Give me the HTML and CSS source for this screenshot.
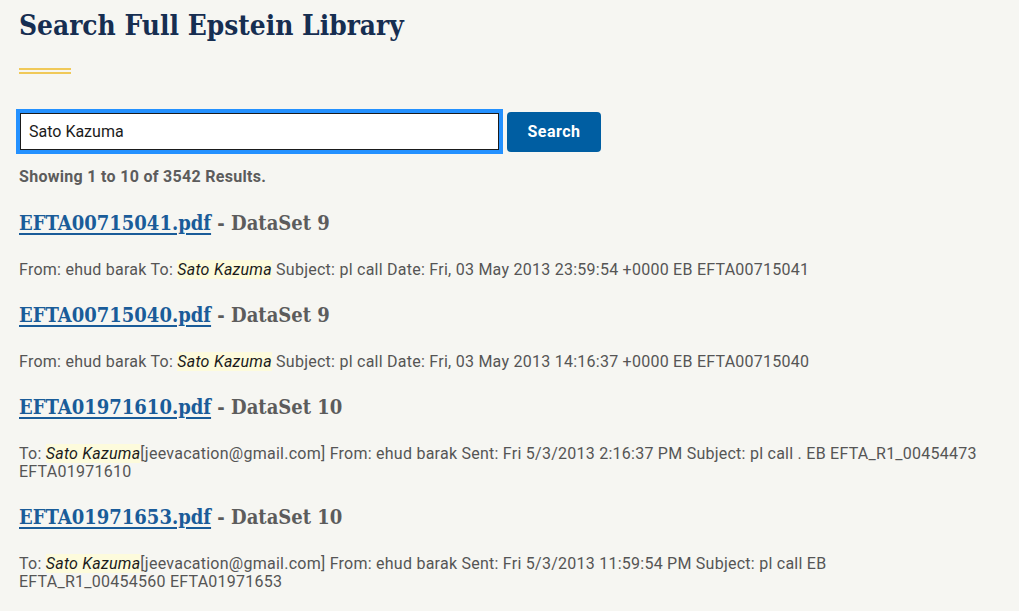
FILE: index.html
```html
<!DOCTYPE html>
<html lang="en">
<head>
<meta charset="utf-8">
<title>Search Full Epstein Library</title>
<link rel="stylesheet" href="styles.css">
</head>
<body>
<main class="page">
  <h1 class="title">Search Full Epstein Library</h1>
  <div class="rule"></div>
  <form class="search">
    <input class="search-input" type="text" value="Sato Kazuma">
    <button class="search-btn" type="button">Search</button>
  </form>
  <p class="count">Showing 1 to 10 of 3542 Results.</p>
  <ul class="results">
    <li class="result">
      <h2 class="result-title"><a href="#">EFTA00715041.pdf</a> - DataSet 9</h2>
      <p class="snippet">From: ehud barak To: <em class="hl">Sato Kazuma</em> Subject: pl call Date: Fri, 03 May 2013 23:59:54 +0000 EB EFTA00715041</p>
    </li>
    <li class="result">
      <h2 class="result-title"><a href="#">EFTA00715040.pdf</a> - DataSet 9</h2>
      <p class="snippet">From: ehud barak To: <em class="hl">Sato Kazuma</em> Subject: pl call Date: Fri, 03 May 2013 14:16:37 +0000 EB EFTA00715040</p>
    </li>
    <li class="result">
      <h2 class="result-title"><a href="#">EFTA01971610.pdf</a> - DataSet 10</h2>
      <p class="snippet">To: <em class="hl">Sato Kazuma</em>[jeevacation@gmail.com] From: ehud barak Sent: Fri 5/3/2013 2:16:37 PM Subject: pl call . EB EFTA_R1_00454473 EFTA01971610</p>
    </li>
    <li class="result">
      <h2 class="result-title"><a href="#">EFTA01971653.pdf</a> - DataSet 10</h2>
      <p class="snippet">To: <em class="hl">Sato Kazuma</em>[jeevacation@gmail.com] From: ehud barak Sent: Fri 5/3/2013 11:59:54 PM Subject: pl call EB EFTA_R1_00454560&nbsp;EFTA01971653</p>
    </li>
  </ul>
</main>
</body>
</html>
```
FILE: styles.css
```css
html, body {
  margin: 0;
  padding: 0;
  background: #f6f6f2;
}
body {
  font-family: "Roboto", "Liberation Sans", sans-serif;
  color: #1b1b1b;
}
.page {
  padding: 0 19px;
  max-width: 981px;
}
.title {
  margin: 0;
  padding-top: 8px;
  font-family: "DejaVu Serif Condensed", "DejaVu Serif", serif;
  font-stretch: condensed;
  font-weight: bold;
  font-size: 27.8px;
  line-height: 36px;
  color: #162e51;
}
.rule {
  width: 52px;
  height: 2px;
  margin-top: 24px;
  border-top: 2px solid #f0c959;
  border-bottom: 2px solid #f0c959;
}
.search {
  display: flex;
  align-items: center;
  gap: 8px;
  margin-top: 36px;
}
.search-input {
  box-sizing: border-box;
  width: 479px;
  height: 37px;
  margin: 3px 0 3px 1px;
  padding: 0 8px;
  border: 1px solid #1b1b1b;
  outline: 4px solid #2491ff;
  outline-offset: 0;
  background: #fff;
  font-family: "Roboto", "Liberation Sans", sans-serif;
  font-size: 16px;
  color: #1b1b1b;
}
.search-btn {
  width: 94px;
  height: 40px;
  border: 0;
  border-radius: 4px;
  background: #005ea2;
  color: #fff;
  font-family: "Roboto", "Liberation Sans", sans-serif;
  font-weight: bold;
  font-size: 16px;
  letter-spacing: 0.5px;
}
.count {
  margin: 14px 0 0;
  font-size: 16px;
  line-height: 20px;
  font-weight: bold;
  letter-spacing: 0.3px;
  color: #5c5c5c;
}
.results {
  list-style: none;
  margin: 0;
  padding: 0;
}
.result-title {
  margin: 22px 0 0;
  font-family: "DejaVu Serif Condensed", "DejaVu Serif", serif;
  font-stretch: condensed;
  font-weight: bold;
  font-size: 20px;
  line-height: 28px;
  color: #5c5c5c;
}
.result-title a {
  color: #1a5c99;
  text-decoration: underline;
  text-decoration-thickness: 2px;
  text-underline-offset: 3px;
}
.snippet {
  margin: 24px 0 0;
  font-size: 16px;
  line-height: 18px;
  letter-spacing: 0.25px;
  color: #555;
}
.hl {
  font-style: italic;
  color: #1b1b1b;
  background: #fdfbdc;
}
```
